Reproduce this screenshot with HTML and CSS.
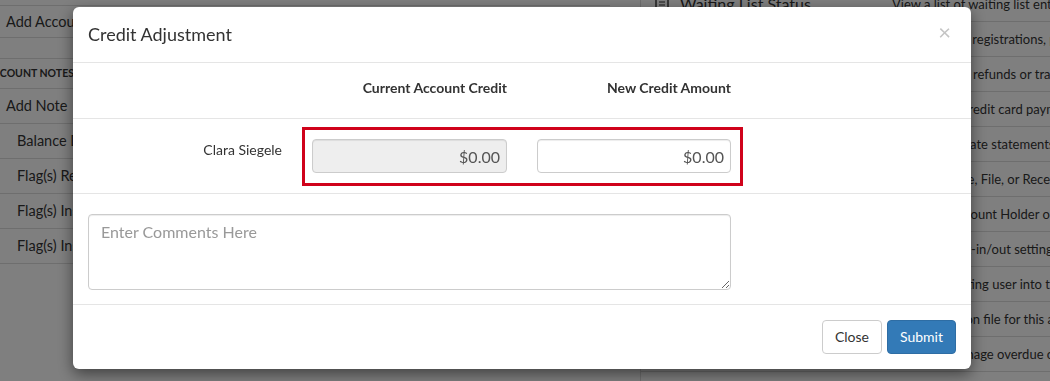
FILE: index.html
```html
<!DOCTYPE html>
<html lang="en">
<head>
<meta charset="utf-8">
<title>Credit Adjustment</title>
<link rel="stylesheet" href="styles.css">
</head>
<body>
<div class="page">
  <div class="left">
    <div class="lrow top">Add Account Holder</div>
    <div class="lspacer"></div>
    <div class="lhead"><span>ACCOUNT NOTES</span></div>
    <div class="lrow">Add Note</div>
    <div class="lrow sub">Balance Due Reminder</div>
    <div class="lrow sub">Flag(s) Removed</div>
    <div class="lrow sub">Flag(s) Inserted</div>
    <div class="lrow sub">Flag(s) Inserted by Admin</div>
  </div>
  <div class="right">
    <div class="rrow"><span class="rname"><svg class="ricon" width="14" height="14" viewBox="0 0 14 14"><rect x="1" y="1" width="12" height="12" fill="none" stroke="#333" stroke-width="1.4"/><path d="M4 5h6M4 8h6" stroke="#333" stroke-width="1.2"/></svg>Waiting List Status</span><span class="rdesc">View a list of waiting list entries</span></div>
    <div class="rrow"><span class="rname">Account Activity</span><span class="rdesc">Examine your registrations, payments and credits</span></div>
    <div class="rrow"><span class="rname">Refunds</span><span class="rdesc">Process many refunds or transfers</span></div>
    <div class="rrow"><span class="rname">Make a Payment</span><span class="rdesc">Process any credit card payments</span></div>
    <div class="rrow"><span class="rname">Statements</span><span class="rdesc">Print or generate statements</span></div>
    <div class="rrow"><span class="rname">Add Attachment</span><span class="rdesc">Upload a Note, File, or Receipt</span></div>
    <div class="rrow"><span class="rname">Add Member</span><span class="rdesc">Create an Account Holder or Member</span></div>
    <div class="rrow"><span class="rname">Communication</span><span class="rdesc">Modify all opt-in/out settings</span></div>
    <div class="rrow"><span class="rname">Merge Accounts</span><span class="rdesc">Move an existing user into this account</span></div>
    <div class="rrow"><span class="rname">Stored Cards</span><span class="rdesc">See all cards on file for this account</span></div>
    <div class="rrow"><span class="rname">Overdue</span><span class="rdesc">Mark and manage overdue or late accounts</span></div>
  </div>
</div>

<div class="backdrop"></div>

<div class="modal">
  <div class="modal-header">
    <h4 class="modal-title">Credit Adjustment</h4>
    <span class="close">&times;</span>
  </div>
  <div class="cols">
    <div class="col-label">Current Account Credit</div>
    <div class="col-label second">New Credit Amount</div>
  </div>
  <div class="entry">
    <div class="name">Clara Siegele</div>
    <div class="highlight">
      <input class="amount readonly" type="text" value="$0.00" readonly>
      <input class="amount second" type="text" value="$0.00">
    </div>
  </div>
  <div class="comments">
    <textarea class="comment-box" placeholder="Enter Comments Here"></textarea>
  </div>
  <div class="modal-footer">
    <button class="btn btn-default">Close</button>
    <button class="btn btn-primary">Submit</button>
  </div>
</div>
</body>
</html>
```
FILE: styles.css
```css
html, body {
  margin: 0;
  padding: 0;
  background: #fff;
  font-family: Lato, "Open Sans", "Liberation Sans", sans-serif;
  color: #333;
  overflow: hidden;
  height: 381px;
}

.page {
  display: flex;
  width: 1050px;
  height: 381px;
  overflow: hidden;
}

/* left list */
.left {
  width: 610px;
  flex: none;
  margin-top: 5px;
  border-top: 1px solid #ddd;
  font-size: 14.5px;
}
.lrow {
  height: 34px;
  line-height: 34px;
  border-bottom: 1px solid #ddd;
  padding-left: 6px;
  white-space: nowrap;
}
.lrow.top {
  height: 31px;
  line-height: 31px;
}
.lrow.sub {
  padding-left: 17px;
}
.lspacer {
  height: 20px;
  border-bottom: 1px solid #ddd;
}
.lhead {
  height: 29px;
  line-height: 29px;
  border-bottom: 1px solid #ddd;
  font-size: 10.5px;
  font-weight: 700;
  overflow: hidden;
  white-space: nowrap;
}
.lhead span {
  margin-left: -14px;
}

/* right table */
.right {
  flex: 1;
  margin-left: 30px;
  margin-top: -13px;
  border-left: 1px solid #ddd;
  font-size: 16px;
  min-width: 0;
}
.rrow {
  display: flex;
  height: 34px;
  line-height: 34px;
  border-bottom: 1px solid #ddd;
  white-space: nowrap;
  overflow: hidden;
}
.rname {
  width: 249px;
  flex: none;
  padding-left: 14px;
  box-sizing: border-box;
  display: flex;
  align-items: center;
  gap: 11px;
}
.ricon {
  flex: none;
}
.rdesc {
  flex: none;
  font-size: 13px;
  padding-left: 2px;
}

/* overlay */
.backdrop {
  position: fixed;
  inset: 0;
  background: rgba(0, 0, 0, 0.5);
}

.modal {
  position: fixed;
  left: 73px;
  top: 7px;
  width: 898px;
  background: #fff;
  border-radius: 6px;
  box-shadow: 0 5px 15px rgba(0, 0, 0, 0.5);
}

.modal-header {
  display: flex;
  align-items: center;
  justify-content: space-between;
  padding: 15px 20px 16px 15px;
  border-bottom: 1px solid #e5e5e5;
}
.modal-title {
  margin: 0;
  font-size: 18px;
  font-weight: 400;
  line-height: 24px;
  color: #333;
}
.close {
  font-size: 22px;
  line-height: 20px;
  margin-top: -4px;
  color: #c4c4c4;
  font-weight: 400;
}

.cols {
  display: flex;
  gap: 30px;
  padding: 15px 0 20px 239px;
  border-bottom: 1px solid #e5e5e5;
}
.col-label {
  width: 195px;
  text-align: right;
  font-size: 14px;
  font-weight: 700;
  line-height: 20px;
  color: #333;
}
.col-label.second {
  width: 194px;
}

.entry {
  display: flex;
  align-items: flex-start;
  padding: 8px 0 7px 15px;
  border-bottom: 1px solid #e5e5e5;
}
.name {
  width: 194px;
  margin-right: 20px;
  text-align: right;
  font-size: 14px;
  line-height: 20px;
  padding-top: 13px;
  color: #333;
}
.highlight {
  display: flex;
  gap: 30px;
  border: 3px solid #d0021b;
  padding: 9px 9px 10px 7px;
}
.amount {
  box-sizing: border-box;
  width: 195px;
  height: 34px;
  border: 1px solid #ccc;
  border-radius: 4px;
  padding: 6px 6px;
  font-family: Lato, "Open Sans", sans-serif;
  font-size: 16px;
  color: #555;
  text-align: right;
  background: #fff;
  box-shadow: inset 0 1px 1px rgba(0, 0, 0, 0.075);
}
.amount.readonly {
  background: #eee;
}
.amount.second {
  width: 194px;
}

.comments {
  padding: 20px 15px 14px;
  border-bottom: 1px solid #e5e5e5;
}
.comment-box {
  display: block;
  box-sizing: border-box;
  width: 643px;
  height: 76px;
  border: 1px solid #ccc;
  border-radius: 4px;
  padding: 6px 12px;
  font-family: Lato, "Open Sans", sans-serif;
  font-size: 16px;
  line-height: 22px;
  color: #555;
  box-shadow: inset 0 1px 1px rgba(0, 0, 0, 0.075);
}
.comment-box::placeholder {
  color: #999;
}

.modal-footer {
  display: flex;
  justify-content: flex-end;
  gap: 5px;
  padding: 15px;
}
.btn {
  height: 34px;
  padding: 6px 12px;
  font-family: Lato, "Open Sans", sans-serif;
  font-size: 14px;
  line-height: 20px;
  border-radius: 4px;
  border: 1px solid #ccc;
  cursor: pointer;
}
.btn-default {
  background: #fff;
  color: #333;
}
.btn-primary {
  background: #337ab7;
  border-color: #2e6da4;
  color: #fff;
}
```
